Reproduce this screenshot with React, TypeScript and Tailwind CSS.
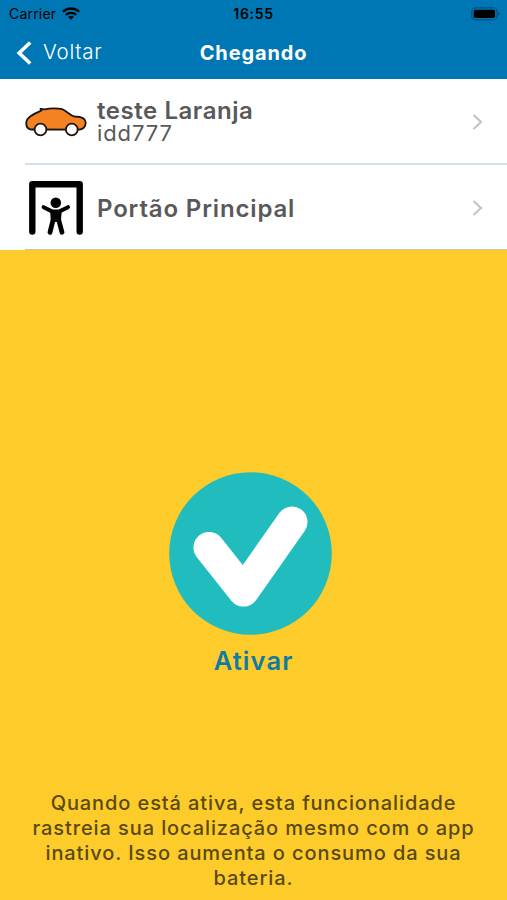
import type { ReactNode } from 'react';
import clsx from 'clsx';

interface RowProps {
  icon: ReactNode;
  title: string;
  subtitle?: string;
  last?: boolean;
}

const MESSAGE = [
  'Quando está ativa, esta funcionalidade',
  'rastreia sua localização mesmo com o app',
  'inativo. Isso aumenta o consumo da sua',
  'bateria.',
];

function StatusBar() {
  return (
    <div className="flex h-[27px] items-center justify-between pr-[6px] pl-[9px] text-black">
      <div className="flex w-[120px] items-center gap-[6px]">
        <span className="text-[14px] leading-none tracking-[0.2px]">Carrier</span>
        <svg width="18" height="13" viewBox="0 0 18 13" fill="none" stroke="currentColor" strokeWidth="2.3">
          <path d="M.9 4.8C5.4.4 12.6.4 17.1 4.8" />
          <path d="M3.900 7.900C6.700 5.200 11.300 5.200 14.100 7.900" />
          <path d="M9 12.700 6.200 9.900C7.800 8.400 10.200 8.400 11.800 9.900Z" fill="currentColor" stroke="none" />
        </svg>
      </div>
      <span className="text-[14px] leading-none font-semibold tracking-[0.7px]">16:55</span>
      <div className="flex w-[123px] justify-end">
        <svg width="30" height="14" viewBox="0 0 30 14">
          <rect x=".9" y=".9" width="25" height="12" rx="3.500" fill="none" stroke="#00527f" strokeWidth="1.300" />
          <rect x="2.700" y="2.700" width="21.400" height="8.400" rx="1.800" fill="#000" />
          <path d="M27.200 5v4c1.800-.6 1.800-3.400 0-4Z" fill="#00527f" />
        </svg>
      </div>
    </div>
  );
}

function NavBar() {
  return (
    <div className="grid h-[51px] grid-cols-[1fr_auto_1fr] items-center px-[16px] text-white">
      <div className="flex items-center gap-[11px]">
        <svg width="16" height="24" viewBox="0 0 16 24" fill="none" stroke="currentColor" strokeWidth="3.600">
          <path d="M14.200 1.500 3.200 12 14.200 22.500" />
        </svg>
        <span className="text-[20.5px] leading-none font-light tracking-[0.75px]">Voltar</span>
      </div>
      <h1 className="text-[20px] leading-none font-bold tracking-[0.85px]">Chegando</h1>
      <div />
    </div>
  );
}

function CarIcon() {
  return (
    <svg width="62" height="30" viewBox="0 0 62 30" stroke="#1a1512" strokeWidth="1.800">
      <path
        d="M5.500 22.500C2 21.500 1 18.500 1.300 15.500 1.800 10 9 7 16.500 3.500L15.500 1.800 20 2.400C25 1 33 1 37 2.200 42 4 45 8.500 49.500 9.500 56 9.500 60.500 11 60.700 15.500 60.800 19.500 58 22.500 54 22.700Z"
        fill="#f58220"
        strokeLinejoin="round"
      />
      <circle cx="15.500" cy="22.500" r="5.900" fill="#fff" />
      <circle cx="46.800" cy="22.500" r="5.900" fill="#fff" />
    </svg>
  );
}

function GateIcon() {
  return (
    <svg width="54" height="54" viewBox="0 0 54 54" fill="none" stroke="#000" strokeLinecap="round" strokeLinejoin="round">
      <path d="M3.300 50.500V3.300H50.700V50.500" strokeWidth="6.400" />
      <circle cx="26.800" cy="21.700" r="5.300" fill="#000" stroke="none" />
      <path d="M14.600 26.200 23.500 30.600H30L39 26.200" strokeWidth="4" />
      <path d="M21 29.500H32.800L31.800 41H22Z" fill="#000" stroke="none" />
      <path d="M24.300 38 21 51.300M29.500 38 33 51.300" strokeWidth="4.800" />
    </svg>
  );
}

function Row({ icon, title, subtitle, last }: RowProps) {
  return (
    <div className={clsx('flex items-center bg-white pl-[25px]', last ? 'h-[85px]' : 'h-[86px]')}>
      <div
        className={clsx(
          'flex h-full flex-1 items-center pt-[2px] pr-[24px]',
          last ? 'border-b border-[#c3c8a6]' : 'border-b-2 border-[#cfe1ea]',
        )}
      >
        <div className="flex w-[62px] justify-center">{icon}</div>
        <div className="ml-[10px] flex-1 text-[#59595b]">
          <div className={clsx('text-[24px] leading-[22px] font-semibold', subtitle ? 'tracking-[0.55px]' : 'pt-[2px] tracking-[0.85px]')}>
            {title}
          </div>
          {subtitle && <div className="text-[22px] leading-[22px] font-normal tracking-[0.9px]">{subtitle}</div>}
        </div>
        <svg width="11" height="16" viewBox="0 0 11 16" fill="none" stroke="#c4c4c6" strokeWidth="2.200">
          <path d="M1.500 1 9 8 1.500 15" />
        </svg>
      </div>
    </div>
  );
}

export default function App() {
  return (
    <div className="flex h-[900px] w-[507px] flex-col overflow-hidden bg-[#fecc2a] font-['Inter',sans-serif]">
      <header className="h-[79px] bg-[#0077b5]">
        <StatusBar />
        <NavBar />
      </header>
      <Row icon={<CarIcon />} title="teste Laranja" subtitle="idd777" />
      <Row icon={<GateIcon />} title="Portão Principal" last />
      <main className="flex flex-1 flex-col items-center pt-[222px]">
        <button className="flex flex-col items-center">
          <svg className="mr-[6px]" width="163" height="163" viewBox="0 0 163 163">
            <circle cx="81.500" cy="81.500" r="81.300" fill="#21bdbe" />
            <path d="M40 75.500 74.500 119 123 50" fill="none" stroke="#fff" strokeWidth="31" strokeLinecap="round" strokeLinejoin="round" />
          </svg>
          <span className="mt-[11px] text-[25.5px] leading-[30px] font-semibold tracking-[1.1px] text-[#107ba3]">Ativar</span>
        </button>
        <p className="mt-auto mb-[9px] text-center text-[20px] leading-[25px] font-medium tracking-[0.9px] text-[#594a12]">
          {MESSAGE.map((line) => (
            <span key={line} className="block whitespace-nowrap">
              {line}
            </span>
          ))}
        </p>
      </main>
    </div>
  );
}
